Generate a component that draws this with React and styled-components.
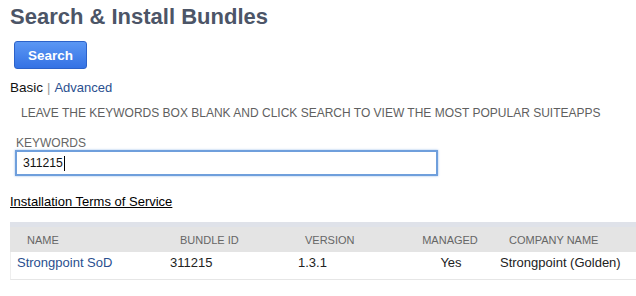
import React from "react";
import styled, { createGlobalStyle } from "styled-components";

const Global = createGlobalStyle`
  html, body { margin: 0; padding: 0; background: #fff; }
  body { font-family: "Liberation Sans", Arial, sans-serif; overflow: hidden; }
`;

const Page = styled.div`
  padding: 4px 0 0 10px;
  display: flex;
  flex-direction: column;
  align-items: flex-start;
`;

const Title = styled.h1`
  margin: 0;
  font-size: 22px;
  line-height: 26px;
  font-weight: bold;
  color: #4c5567;
`;

const Button = styled.button`
  margin: 11px 0 0 4px;
  width: 73px;
  height: 28px;
  border: 1px solid #2c62c9;
  border-radius: 3px;
  background: linear-gradient(#5b97f4, #3472e4);
  color: #fff;
  font-family: "Liberation Sans", Arial, sans-serif;
  font-weight: bold;
  font-size: 13.5px;
  padding: 0;
`;

const Tabs = styled.div`
  margin-top: 11px;
  font-size: 13px;
  line-height: 15px;
  color: #222;
`;

const Strong = styled.span`
  font-size: 13.5px;
  color: #111;
`;

const Sep = styled.span`
  color: #999;
  margin: 0 4px 0 4px;
`;

const Link = styled.a`
  color: #2a4f8f;
  text-decoration: none;
`;

const Hint = styled.div`
  margin: 11px 0 0 11px;
  font-size: 12px;
  line-height: 14px;
  color: #5f5f5f;
  text-transform: uppercase;
`;

const Field = styled.div`
  margin: 16px 0 0 5px;
  display: flex;
  flex-direction: column;
`;

const Label = styled.label`
  font-size: 12px;
  line-height: 14px;
  color: #666;
  padding-left: 1px;
`;

const InputBox = styled.div`
  box-sizing: border-box;
  width: 423px;
  height: 26px;
  border: 2px solid #6f9fdc;
  box-shadow: 0 0 2px rgba(80, 140, 220, 0.6);
  padding: 0 0 0 6px;
  display: flex;
  align-items: center;
  font-size: 12.2px;
  color: #111;
`;

const Caret = styled.span`
  display: inline-block;
  width: 1px;
  height: 15px;
  background: #000;
  margin-left: 1px;
`;

const Terms = styled.a`
  margin-top: 18px;
  font-size: 13px;
  line-height: 15px;
  color: #000;
  text-decoration: underline;
`;

const Table = styled.div`
  margin-top: 13px;
  align-self: stretch;
  border-top: 5px solid #dfe2e9;
`;

const cols = "153px 128px 116px 86px 1fr";

const HeadRow = styled.div`
  display: grid;
  grid-template-columns: ${cols};
  height: 25px;
  align-items: center;
  background: #e4e4e4;
`;

const HeadCell = styled.div`
  font-size: 11px;
  color: #666;
  text-transform: uppercase;
  padding-left: ${(p) => p.$pad}px;
  text-align: ${(p) => (p.$center ? "center" : "left")};
`;

const Row = styled.div`
  display: grid;
  grid-template-columns: ${cols};
  height: 28px;
  box-sizing: border-box;
  padding-bottom: 6px;
  align-items: center;
  border-left: 1px solid #eee;
  border-bottom: 1px solid #e6e6e6;
`;

const Cell = styled.div`
  font-size: 13px;
  color: #222;
  padding-left: ${(p) => p.$pad}px;
  text-align: ${(p) => (p.$center ? "center" : "left")};
`;

export default function App() {
  return (
    <>
      <Global />
      <Page>
        <Title>Search &amp; Install Bundles</Title>
        <Button>Search</Button>
        <Tabs>
          <Strong>Basic</Strong>
          <Sep>|</Sep>
          <Link href="#">Advanced</Link>
        </Tabs>
        <Hint>Leave the keywords box blank and click search to view the most popular suiteapps</Hint>
        <Field>
          <Label>KEYWORDS</Label>
          <InputBox>
            311215<Caret />
          </InputBox>
        </Field>
        <Terms href="#">Installation Terms of Service</Terms>
        <Table>
          <HeadRow>
            <HeadCell $pad={17}>Name</HeadCell>
            <HeadCell $pad={17}>Bundle ID</HeadCell>
            <HeadCell $pad={14}>Version</HeadCell>
            <HeadCell $center>Managed</HeadCell>
            <HeadCell $pad={16}>Company Name</HeadCell>
          </HeadRow>
          <Row>
            <Cell $pad={6}>
              <Link href="#">Strongpoint SoD</Link>
            </Cell>
            <Cell $pad={6}>311215</Cell>
            <Cell $pad={6}>1.3.1</Cell>
            <Cell $center>Yes</Cell>
            <Cell $pad={6}>Strongpoint (Golden)</Cell>
          </Row>
        </Table>
      </Page>
    </>
  );
}
